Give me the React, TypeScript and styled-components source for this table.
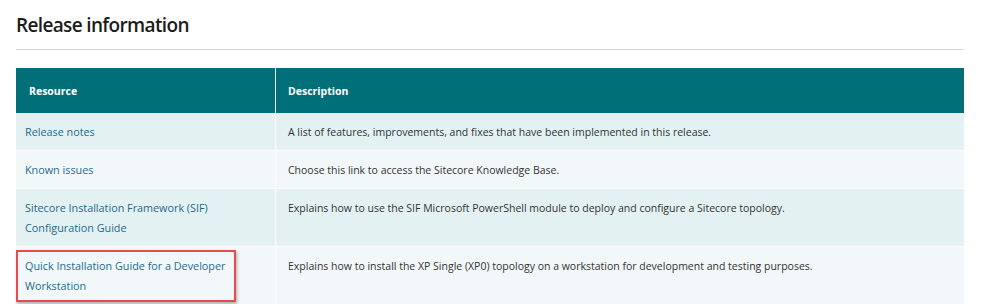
import React from "react";
import styled, { createGlobalStyle } from "styled-components";

const Global = createGlobalStyle`
  html, body { margin: 0; padding: 0; background: #fff; }
  body { font-family: "Open Sans", "Noto Sans", sans-serif; }
`;

const Page = styled.div`
  padding: 0 22px 0 16px;
`;

const Title = styled.h2`
  margin: 0;
  padding-top: 11px;
  font-size: 19px;
  line-height: 28px;
  font-weight: 600;
  color: #1b1b1b;
  letter-spacing: -0.65px;
`;

const Rule = styled.hr`
  border: none;
  border-top: 1px solid #d6d6d6;
  margin: 10px 0 18px;
`;

const Table = styled.table`
  width: 948px;
  border-collapse: collapse;
  font-size: 10.5px;
`;

const Th = styled.th`
  background: #006f78;
  color: #fff;
  font-weight: 700;
  text-align: left;
  height: 45px;
  padding: 0 12px;
  border-left: 1px solid #fff;
  &:first-child { border-left: none; width: 234px; padding-left: 13px; }
`;

const Tr = styled.tr<{ $alt: boolean }>`
  background: ${(p) => (p.$alt ? "#f2f8f9" : "#e4f1f3")};
  border-top: 1px solid #fff;
  &:first-child { border-top: none; }
`;

const Td = styled.td`
  vertical-align: top;
  padding: 9px 12px 8px 12px;
  line-height: 20px;
  color: #333;
  border-left: 1px solid #fff;
  &:first-child { border-left: none; padding-left: 9px; }
`;

const Link = styled.a<{ $highlight?: boolean }>`
  color: #1e6b8c;
  font-size: 10.8px;
  text-decoration: none;
  display: inline-block;
  position: relative;
  ${(p) =>
    p.$highlight
      ? `
    &::after {
      content: "";
      position: absolute;
      left: -9px; top: -6px; right: -11px; bottom: -6px;
      border: 2px solid #e84a4f;
      box-shadow: 1px 2px 3px rgba(0,0,0,0.3);
    }
  `
      : ""}
`;

const rows = [
  {
    res: ["Release notes"],
    desc: "A list of features, improvements, and fixes that have been implemented in this release.",
  },
  { res: ["Known issues"], desc: "Choose this link to access the Sitecore Knowledge Base." },
  {
    res: ["Sitecore Installation Framework (SIF)", "Configuration Guide"],
    desc: "Explains how to use the SIF Microsoft PowerShell module to deploy and configure a Sitecore topology.",
  },
  {
    res: ["Quick Installation Guide for a Developer", "Workstation"],
    desc: "Explains how to install the XP Single (XP0) topology on a workstation for development and testing purposes.",
    hl: true,
  },
];

export default function App() {
  return (
    <Page>
      <Global />
      <Title>Release information</Title>
      <Rule />
      <Table>
        <thead>
          <tr>
            <Th>Resource</Th>
            <Th>Description</Th>
          </tr>
        </thead>
        <tbody>
          {rows.map((r, i) => (
            <Tr key={i} $alt={i % 2 === 1}>
              <Td>
                <Link href="#" $highlight={r.hl}>
                  {r.res.map((l, j) => (
                    <React.Fragment key={j}>
                      {j > 0 && <br />}
                      {l}
                    </React.Fragment>
                  ))}
                </Link>
              </Td>
              <Td>{r.desc}</Td>
            </Tr>
          ))}
        </tbody>
      </Table>
    </Page>
  );
}
